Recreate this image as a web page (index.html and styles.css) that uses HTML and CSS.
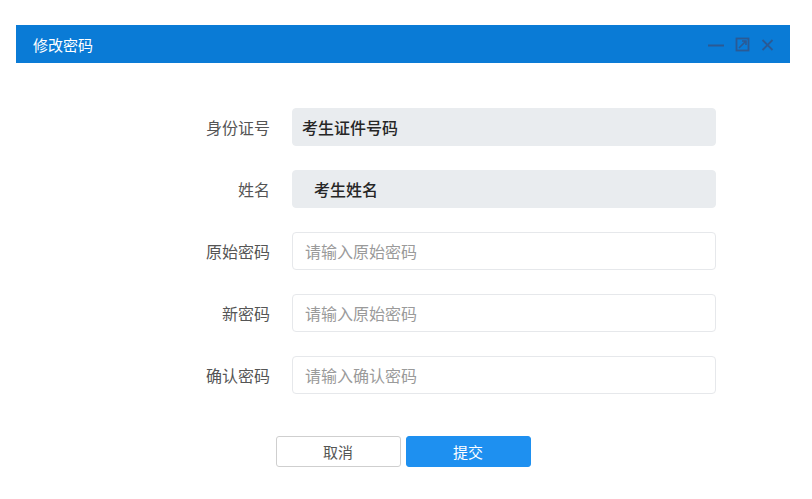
FILE: index.html
```html
<!DOCTYPE html>
<html lang="zh">
<head>
<meta charset="utf-8">
<link rel="stylesheet" href="styles.css">
</head>
<body>
<div class="dialog">
  <div class="header">
    <span class="title">修改密码</span>
    <div class="tools">
      <svg class="ico" width="16" height="15" viewBox="0 0 16 15"><path d="M0 8.5h16" stroke="currentColor" stroke-width="2"/></svg>
      <svg class="ico" width="15" height="15" viewBox="0 0 15 15"><rect x="1.5" y="1.5" width="12" height="12" fill="none" stroke="currentColor" stroke-width="1.8"/><path d="M4 11L11 4M7 4h4v4" fill="none" stroke="currentColor" stroke-width="1.6"/></svg>
      <svg class="ico" width="13" height="15" viewBox="0 0 13 15"><path d="M1.5 3l10 10M11.5 3l-10 10" stroke="currentColor" stroke-width="1.8"/></svg>
    </div>
  </div>
  <form class="form">
    <label class="lbl">身份证号</label>
    <div class="field disabled">考生证件号码</div>
    <label class="lbl">姓名</label>
    <div class="field disabled indent">考生姓名</div>
    <label class="lbl">原始密码</label>
    <input class="field" placeholder="请输入原始密码">
    <label class="lbl">新密码</label>
    <input class="field" placeholder="请输入原始密码">
    <label class="lbl">确认密码</label>
    <input class="field" placeholder="请输入确认密码">
  </form>
  <div class="actions">
    <button type="button" class="btn cancel">取消</button>
    <button type="button" class="btn submit">提交</button>
  </div>
</div>
</body>
</html>
```
FILE: styles.css
```css
html, body {
  margin: 0;
  padding: 0;
  background: #ffffff;
  font-family: "Noto Sans CJK SC", "Noto Sans", sans-serif;
}
.dialog {
  margin: 25px 22px 0 16px;
  background: #ffffff;
  height: 474px;
}
.header {
  height: 38px;
  background: #0a7bd6;
  display: flex;
  align-items: center;
  justify-content: space-between;
  padding: 0 16px 0 17px;
}
.title {
  color: #ffffff;
  font-size: 15px;
}
.tools {
  display: flex;
  align-items: center;
  gap: 11px;
  color: #2b5a94;
}
.ico { display: block; }
.form {
  display: grid;
  grid-template-columns: 254px 424px;
  column-gap: 22px;
  row-gap: 24px;
  padding-top: 45px;
  margin: 0;
}
.lbl {
  text-align: right;
  font-size: 16px;
  color: #555;
  line-height: 38px;
}
.field {
  box-sizing: border-box;
  height: 38px;
  width: 424px;
  border: 1px solid #e6e8eb;
  border-radius: 4px;
  padding: 0 12px;
  font-size: 15px;
  font-family: inherit;
  color: #333;
  background: #fff;
  outline: none;
  display: flex;
  align-items: center;
}
.field::placeholder { color: #9a9a9a; font-size: 16px; }
.field.disabled {
  background: #e9ecef;
  border-color: #e9ecef;
  padding-left: 9px;
  font-size: 16px;
  font-weight: 500;
  color: #262626;
}
.field.indent { padding-left: 21px; }
.actions {
  display: flex;
  justify-content: center;
  gap: 5px;
  margin-top: 42px;
}
.btn {
  box-sizing: border-box;
  width: 125px;
  height: 31px;
  border-radius: 3px;
  font-family: inherit;
  font-size: 15px;
  cursor: pointer;
}
.cancel {
  background: #fff;
  border: 1px solid #cfcfcf;
  color: #555;
}
.submit {
  background: #1e90f0;
  border: 1px solid #1e90f0;
  color: #fff;
}
```
